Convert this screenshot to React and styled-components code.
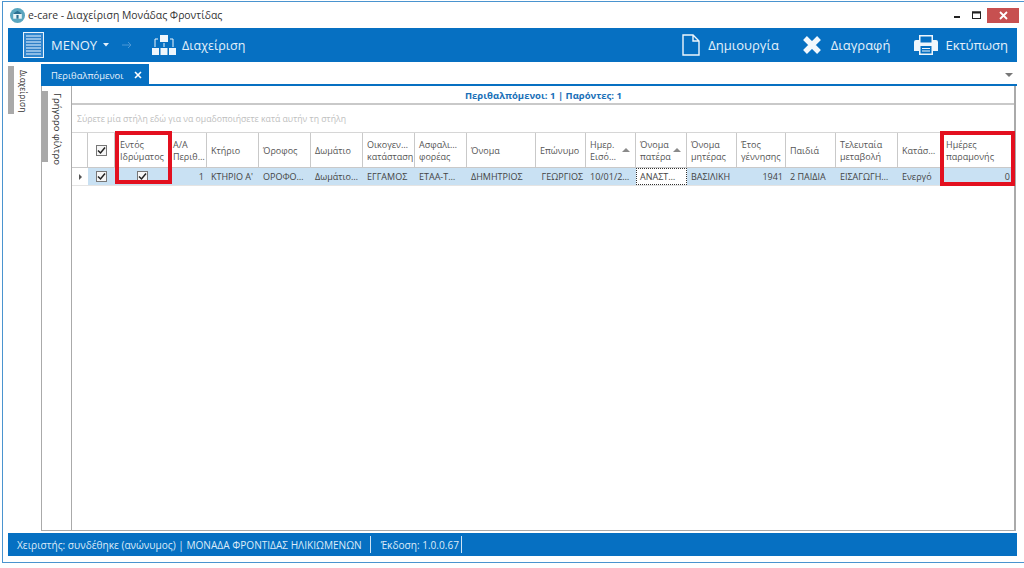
import React from 'react';
import styled, { createGlobalStyle } from 'styled-components';

const Global = createGlobalStyle`
  * { box-sizing: border-box; }
  html, body { margin: 0; padding: 0; background: #fff; }
  body { font-family: "Open Sans", "Noto Sans", sans-serif; color: #444; overflow: hidden; }
`;

const Page = styled.div`
  width: 1024px;
  height: 568px;
  padding: 1px 0 5px 2px;
`;
const Window = styled.div`
  height: 100%;
  border: 1px solid #4a94cf;
  border-right-width: 0;
  padding: 0 7px 6px 5px;
  display: flex;
  flex-direction: column;
`;
const TitleBar = styled.div`
  height: 26px;
  display: flex;
  align-items: center;
  margin-left: 2px;
  font-size: 10.4px;
  color: #333;
  gap: 3px;
`;
const Title = styled.div`
  flex: 1;
`;
const WinBtn = styled.div`
  width: ${p => p.$w}px;
  height: 15px;
  margin-left: ${p => p.$ml}px;
  margin-right: ${p => p.$mr || 0}px;
  background: ${p => p.$bg || 'transparent'};
  display: flex;
  align-items: center;
  justify-content: center;
`;
const Toolbar = styled.div`
  height: 34px;
  background: #0670c2;
  color: #e4f0fa;
  display: flex;
  align-items: center;
  padding-left: 15px;
  padding-right: 9px;
  font-size: 13px;
`;
const ToolGroup = styled.div`
  display: flex;
  align-items: center;
  gap: ${p => p.$gap}px;
  margin-left: ${p => p.$ml || 0}px;
`;
const ManageLabel = styled.span`
  font-size: 12.5px;
`;
const Spacer = styled.div` flex: 1; `;
const Body = styled.div`
  flex: 1;
  display: flex;
  min-height: 0;
`;
const LeftRail = styled.div`
  width: 33px;
  display: flex;
  padding-top: 4px;
  gap: 3px;
`;
const RailTab = styled.div`
  width: 6px;
  height: ${p => p.$h}px;
  background: #a9a9a9;
  flex: none;
`;
const RailLabel = styled.div`
  writing-mode: vertical-rl;
  font-size: ${p => p.$fs}px;
  color: #333;
  padding-top: ${p => p.$pt}px;
  white-space: nowrap;
  line-height: 12px;
`;
const Main = styled.div`
  flex: 1;
  min-width: 0;
  display: flex;
  flex-direction: column;
`;
const TabStrip = styled.div`
  height: 24px;
  flex: none;
  padding-top: 2px;
  border-bottom: 2px solid #0670c2;
  display: flex;
  justify-content: space-between;
`;
const Tab = styled.div`
  width: 108px;
  height: 22px;
  background: #0670c2;
  color: #e8f2fb;
  font-size: 9.4px;
  display: flex;
  align-items: center;
  padding-left: 10px;
  gap: 11px;
`;
const TabMenu = styled.div`
  width: 0;
  height: 0;
  border-left: 4px solid transparent;
  border-right: 4px solid transparent;
  border-top: 4px solid #777;
  margin: 9px 4px 0 0;
`;
const Content = styled.div`
  flex: 1;
  display: flex;
  min-height: 0;
  margin-bottom: 2px;
  margin-right: 1px;
  border-bottom: 1px solid #aaa;
  border-right: 2px solid #aaa;
`;
const FilterRail = styled.div`
  width: 31px;
  flex: none;
  border-left: 1px solid #aaa;
  border-right: 1px solid #aaa;
  display: flex;
  gap: 3px;
  padding-top: 5px;
`;
const GridArea = styled.div`
  flex: 1;
  min-width: 0;
  position: relative;
`;
const Summary = styled.div`
  height: 19px;
  border-bottom: 2px solid #c9c9c9;
  color: #1a70b8;
  font-weight: 700;
  font-size: 9.5px;
  display: flex;
  align-items: center;
  justify-content: center;
  padding: 1px 0 0 1px;
`;
const GroupPanel = styled.div`
  height: 28px;
  color: #c0c0c0;
  font-size: 8.7px;
  padding: 8px 0 0 5px;
  border-bottom: 1px solid #d6d6d6;
`;
const Row = styled.div`
  display: flex;
  height: ${p => p.$h}px;
  border-bottom: 1px solid ${p => p.$line};
`;
const HeadCell = styled.div`
  width: ${p => p.$w}px;
  flex: none;
  border-right: 1px solid #c9c9c9;
  font-size: 9px;
  line-height: 12px;
  color: #555;
  display: flex;
  align-items: center;
  justify-content: ${p => p.$center ? 'center' : 'flex-start'};
  padding: 1px ${p => p.$center ? 0 : 2}px 0 ${p => p.$center ? 0 : p.$pl}px;
  position: relative;
  white-space: pre-line;
`;
const DataCell = styled.div`
  width: ${p => p.$w}px;
  flex: none;
  background: ${p => p.$focus || p.$plain ? '#fff' : '#c9e1f3'};
  outline: ${p => p.$focus ? '1px dotted #333' : 'none'};
  outline-offset: -1px;
  font-size: 9px;
  line-height: 16px;
  color: #444;
  display: flex;
  align-items: center;
  justify-content: ${p => p.$center ? 'center' : p.$right ? 'flex-end' : 'flex-start'};
  padding: 0 ${p => p.$center ? 0 : p.$pr}px 0 ${p => p.$center ? 0 : 4}px;
  white-space: nowrap;
  overflow: hidden;
`;
const CheckBox = styled.div`
  width: 11px;
  height: 11px;
  border: 1px solid #777;
  background: #f6f6f6;
  display: flex;
  align-items: center;
  justify-content: center;
`;
const SortArrow = styled.div`
  width: 0;
  height: 0;
  border-left: 4px solid transparent;
  border-right: 4px solid transparent;
  border-bottom: 4px solid #8a8a8a;
  position: absolute;
  right: 5px;
  top: 15px;
`;
const RowPointer = styled.div`
  width: 0;
  height: 0;
  border-top: 3px solid transparent;
  border-bottom: 3px solid transparent;
  border-left: 3px solid #555;
`;
const Highlight = styled.div`
  position: absolute;
  left: ${p => p.$x}px;
  top: 45px;
  width: ${p => p.$w}px;
  height: ${p => p.$h}px;
  border: 4px solid #e3101f;
  pointer-events: none;
`;
const StatusBar = styled.div`
  height: 23px;
  flex: none;
  background: #0670c2;
  color: #dcebf8;
  font-size: 10.1px;
  display: flex;
  align-items: center;
  padding-left: 9px;
`;
const StatusItem = styled.div`
  height: 17px;
  display: flex;
  align-items: center;
  padding-right: ${p => p.$pr}px;
  margin-right: ${p => p.$mr}px;
  border-right: 1px solid #cfe4f5;
  white-space: nowrap;
`;

const Check = () => (
  <CheckBox>
    <svg width="9" height="9" viewBox="0 0 9 9"><path d="M1 4.5 L3.5 7 L8 1.5" fill="none" stroke="#222" strokeWidth="1.5" /></svg>
  </CheckBox>
);

const columns = [
  { w: 16, head: '', data: <RowPointer />, center: true, plain: true },
  { w: 27, head: <Check />, data: <Check />, center: true },
  { w: 55, head: 'Εντός\nΙδρύματος', data: <Check />, center: true, pl: 5 },
  { w: 37, head: 'Α/Α\nΠεριθ…', data: '1', right: true, pl: 3 },
  { w: 52, head: 'Κτήριο', data: 'ΚΤΗΡΙΟ Α\'' },
  { w: 52, head: 'Όροφος', data: 'ΟΡΟΦΟ…' },
  { w: 52, head: 'Δωμάτιο', data: 'Δωμάτιο…' },
  { w: 52, head: 'Οικογεν…\nκατάσταση', data: 'ΕΓΓΑΜΟΣ' },
  { w: 52, head: 'Ασφαλι…\nφορέας', data: 'ΕΤΑΑ-Τ…' },
  { w: 69, head: 'Όνομα', data: 'ΔΗΜΗΤΡΙΟΣ' },
  { w: 50, head: 'Επώνυμο', data: 'ΓΕΩΡΓΙΟΣ', right: true },
  { w: 50, head: 'Ημερ.\nΕισό…', data: '10/01/2…', sort: true },
  { w: 51, head: 'Όνομα\nπατέρα', data: 'ΑΝΑΣΤ…', sort: true, focus: true },
  { w: 50, head: 'Όνομα\nμητέρας', data: 'ΒΑΣΙΛΙΚΗ' },
  { w: 49, head: 'Έτος\nγέννησης', data: '1941', right: true },
  { w: 50, head: 'Παιδιά', data: '2 ΠΑΙΔΙΑ' },
  { w: 62, head: 'Τελευταία\nμεταβολή', data: 'ΕΙΣΑΓΩΓΗ…' },
  { w: 44, head: 'Κατάσ…', data: 'Ενεργό' },
  { w: 73, head: 'Ημέρες\nπαραμονής', data: '0', right: true, pr: 5 },
];

const MenuIcon = () => (
  <svg width="21" height="26" viewBox="0 0 21 26">
    <rect x="0.5" y="0.5" width="20" height="25" fill="#2f86cf" stroke="#eaf4fc" />
    <rect x="3" y="3" width="15" height="20" fill="#8dbde6" />
    {[5, 8, 11, 14, 17, 20].map(y => <rect key={y} x="3" y={y} width="15" height="1" fill="#2f7fc6" />)}
  </svg>
);
const OrgIcon = () => (
  <svg width="24" height="21" viewBox="0 0 24 21" fill="#eef6fc">
    <rect x="8" y="0" width="8" height="7" />
    <rect x="0" y="13" width="7" height="7" />
    <rect x="8.5" y="13" width="7" height="7" />
    <rect x="17" y="13" width="7" height="7" />
    <path d="M3 12 V4 H6 M21 12 V4 H18 M12 8 V12" fill="none" stroke="#eef6fc" />
  </svg>
);
const DocIcon = () => (
  <svg width="18" height="22" viewBox="0 0 18 22" fill="none" stroke="#eef6fc" strokeWidth="1.4">
    <path d="M1 1 H11 L17 7 V21 H1 Z M11 1 V7 H17" />
  </svg>
);
const CrossIcon = () => (
  <svg width="20" height="20" viewBox="0 0 20 20"><path d="M3 3 L17 17 M17 3 L3 17" stroke="#f2f8fd" strokeWidth="5.4" /></svg>
);
const PrintIcon = () => (
  <svg width="24" height="20" viewBox="0 0 24 20">
    <path d="M0 7 Q0 5 2 5 H5 V0 H19 V5 H22 Q24 5 24 7 V16 H19 V20 H5 V16 H0 Z" fill="#eef6fc" />
    <rect x="6.5" y="1.5" width="11" height="6" fill="#0670c2" />
    <rect x="6.5" y="11" width="11" height="7.5" fill="#0670c2" />
    <rect x="8" y="13" width="8" height="1" fill="#eef6fc" />
    <rect x="8" y="15.5" width="8" height="1" fill="#eef6fc" />
  </svg>
);
const AppIcon = () => (
  <svg width="15" height="15" viewBox="0 0 14 14">
    <circle cx="7" cy="7" r="7" fill="#5aa6bf" />
    <rect x="3" y="5" width="8" height="5" fill="#eaf5f8" />
    <path d="M2.5 5.5 L7 2.5 L11.5 5.5 Z" fill="#2b6f91" />
    <rect x="6" y="6.5" width="2" height="3.5" fill="#2b6f91" />
  </svg>
);

export default function App() {
  return (
    <Page>
      <Global />
      <Window>
        <TitleBar>
          <AppIcon />
          <Title>e-care - Διαχείριση Μονάδας Φροντίδας</Title>
          <WinBtn $w={10} $ml={0}>
            <svg width="8" height="8" viewBox="0 0 8 8"><rect x="1" y="5" width="6" height="2" fill="#222" /></svg>
          </WinBtn>
          <WinBtn $w={10} $ml={6}>
            <svg width="9" height="8" viewBox="0 0 9 8"><rect x="0.5" y="1" width="8" height="6.5" fill="none" stroke="#222" /><rect x="0" y="0.5" width="9" height="2" fill="#222" /></svg>
          </WinBtn>
          <WinBtn $w={32} $ml={3} $mr={-2} $bg="#c75050">
            <svg width="9" height="9" viewBox="0 0 9 9"><path d="M1 1 L8 8 M8 1 L1 8" stroke="#fff" strokeWidth="1.8" /></svg>
          </WinBtn>
        </TitleBar>
        <Toolbar>
          <MenuIcon />
          <ToolGroup $ml={7} $gap={6}>
            <span>ΜΕΝΟΥ</span>
            <svg width="6" height="4" viewBox="0 0 6 4"><path d="M0 0 H6 L3 3.5 Z" fill="#e4f0fa" /></svg>
          </ToolGroup>
          <ToolGroup $ml={13} $gap={0}>
            <svg width="10" height="8" viewBox="0 0 10 8"><path d="M0 4 H9 M6 1 L9 4 L6 7" fill="none" stroke="#4b97d5" /></svg>
          </ToolGroup>
          <ToolGroup $ml={20} $gap={6}>
            <OrgIcon />
            <ManageLabel>Διαχείριση</ManageLabel>
          </ToolGroup>
          <Spacer />
          <ToolGroup $gap={8}><DocIcon /><span>Δημιουργία</span></ToolGroup>
          <ToolGroup $ml={23} $gap={9}><CrossIcon /><span>Διαγραφή</span></ToolGroup>
          <ToolGroup $ml={24} $gap={7}><PrintIcon /><span>Εκτύπωση</span></ToolGroup>
        </Toolbar>
        <Body>
          <LeftRail>
            <RailTab $h={48} />
            <RailLabel $pt={4} $fs={8.4}>Διαχείριση</RailLabel>
          </LeftRail>
          <Main>
            <TabStrip>
              <Tab>
                <span>Περιθαλπόμενοι</span>
                <svg width="8" height="8" viewBox="0 0 8 8"><path d="M1 1 L7 7 M7 1 L1 7" stroke="#fff" strokeWidth="1.6" /></svg>
              </Tab>
              <TabMenu />
            </TabStrip>
            <Content>
              <FilterRail>
                <RailTab $h={71} />
                <RailLabel $pt={2} $fs={9.5}>Γρήγορο φίλτρο</RailLabel>
              </FilterRail>
              <GridArea>
                <Summary>Περιθαλπόμενοι: 1 | Παρόντες: 1</Summary>
                <GroupPanel>Σύρετε μία στήλη εδώ για να ομαδοποιήσετε κατά αυτήν τη στήλη</GroupPanel>
                <Row $h={35} $line="#c9c9c9">
                  {columns.map((c, i) => (
                    <HeadCell key={i} $w={c.w} $center={i < 2} $pl={c.pl ?? 4}>
                      {c.head}
                      {c.sort && <SortArrow />}
                    </HeadCell>
                  ))}
                </Row>
                <Row $h={18} $line="#e4e4e4">
                  {columns.map((c, i) => (
                    <DataCell key={i} $w={c.w} $center={c.center} $right={c.right} $focus={c.focus} $plain={c.plain} $pr={c.pr ?? 3}>
                      {c.data}
                    </DataCell>
                  ))}
                </Row>
                <Highlight $x={43} $w={57} $h={53} />
                <Highlight $x={868} $w={75} $h={55} />
              </GridArea>
            </Content>
          </Main>
        </Body>
        <StatusBar>
          <StatusItem $pr={8} $mr={10}>Χειριστής: συνδέθηκε (ανώνυμος) | ΜΟΝΑΔΑ ΦΡΟΝΤΙΔΑΣ ΗΛΙΚΙΩΜΕΝΩΝ</StatusItem>
          <StatusItem $pr={2} $mr={0}>Έκδοση: 1.0.0.67</StatusItem>
        </StatusBar>
      </Window>
    </Page>
  );
}
